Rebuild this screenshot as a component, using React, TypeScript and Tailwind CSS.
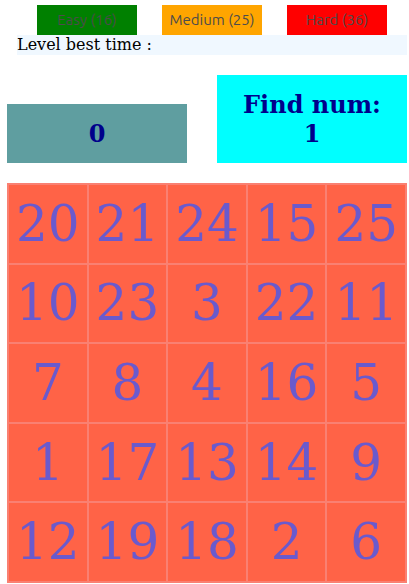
const levels = [
  { label: "Easy (16)", color: "bg-[#008000]" },
  { label: "Medium (25)", color: "bg-[#ffa500]" },
  { label: "Hard (36)", color: "bg-[#ff0000]" },
];

const board = [
  [20, 21, 24, 15, 25],
  [10, 23, 3, 22, 11],
  [7, 8, 4, 16, 5],
  [1, 17, 13, 14, 9],
  [12, 19, 18, 2, 6],
];

function LevelPicker() {
  return (
    <div className="flex justify-center gap-[25px] pl-[10px]">
      {levels.map((level) => (
        <button
          key={level.label}
          type="button"
          className={`h-[30px] w-[100px] whitespace-nowrap font-['Ubuntu','Noto_Sans',sans-serif] text-[15px] text-[#4c4c4c] ${level.color}`}
        >
          {level.label}
        </button>
      ))}
    </div>
  );
}

function Board() {
  return (
    <table className="h-[400px] w-full table-fixed border-collapse bg-[#ff6347] text-[50px] leading-[60px] text-[#6a5acd]">
      <tbody>
        {board.map((row, i) => (
          <tr key={i}>
            {row.map((n) => (
              <td key={n} className="border-2 border-[#fa8072] p-0 text-center">
                <button type="button" className="w-full">
                  {n}
                </button>
              </td>
            ))}
          </tr>
        ))}
      </tbody>
    </table>
  );
}

export default function App() {
  return (
    <main className="bg-white pt-[5px] pr-[2px] pl-[7px] font-['DejaVu_Serif',serif] text-black">
      <LevelPicker />
      <p className="ml-[10px] bg-[#f0f8ff] text-base leading-5">Level best time :</p>
      <div className="mt-5 mb-5 flex items-end gap-[30px] text-center text-2xl leading-[29px] font-bold text-[#00008b]">
        <div className="w-[180px] bg-[#5f9ea0] p-[15px]">0</div>
        <div className="flex-1 bg-[#00ffff] p-[15px]">
          <div>Find num:</div>
          <div>1</div>
        </div>
      </div>
      <Board />
    </main>
  );
}
